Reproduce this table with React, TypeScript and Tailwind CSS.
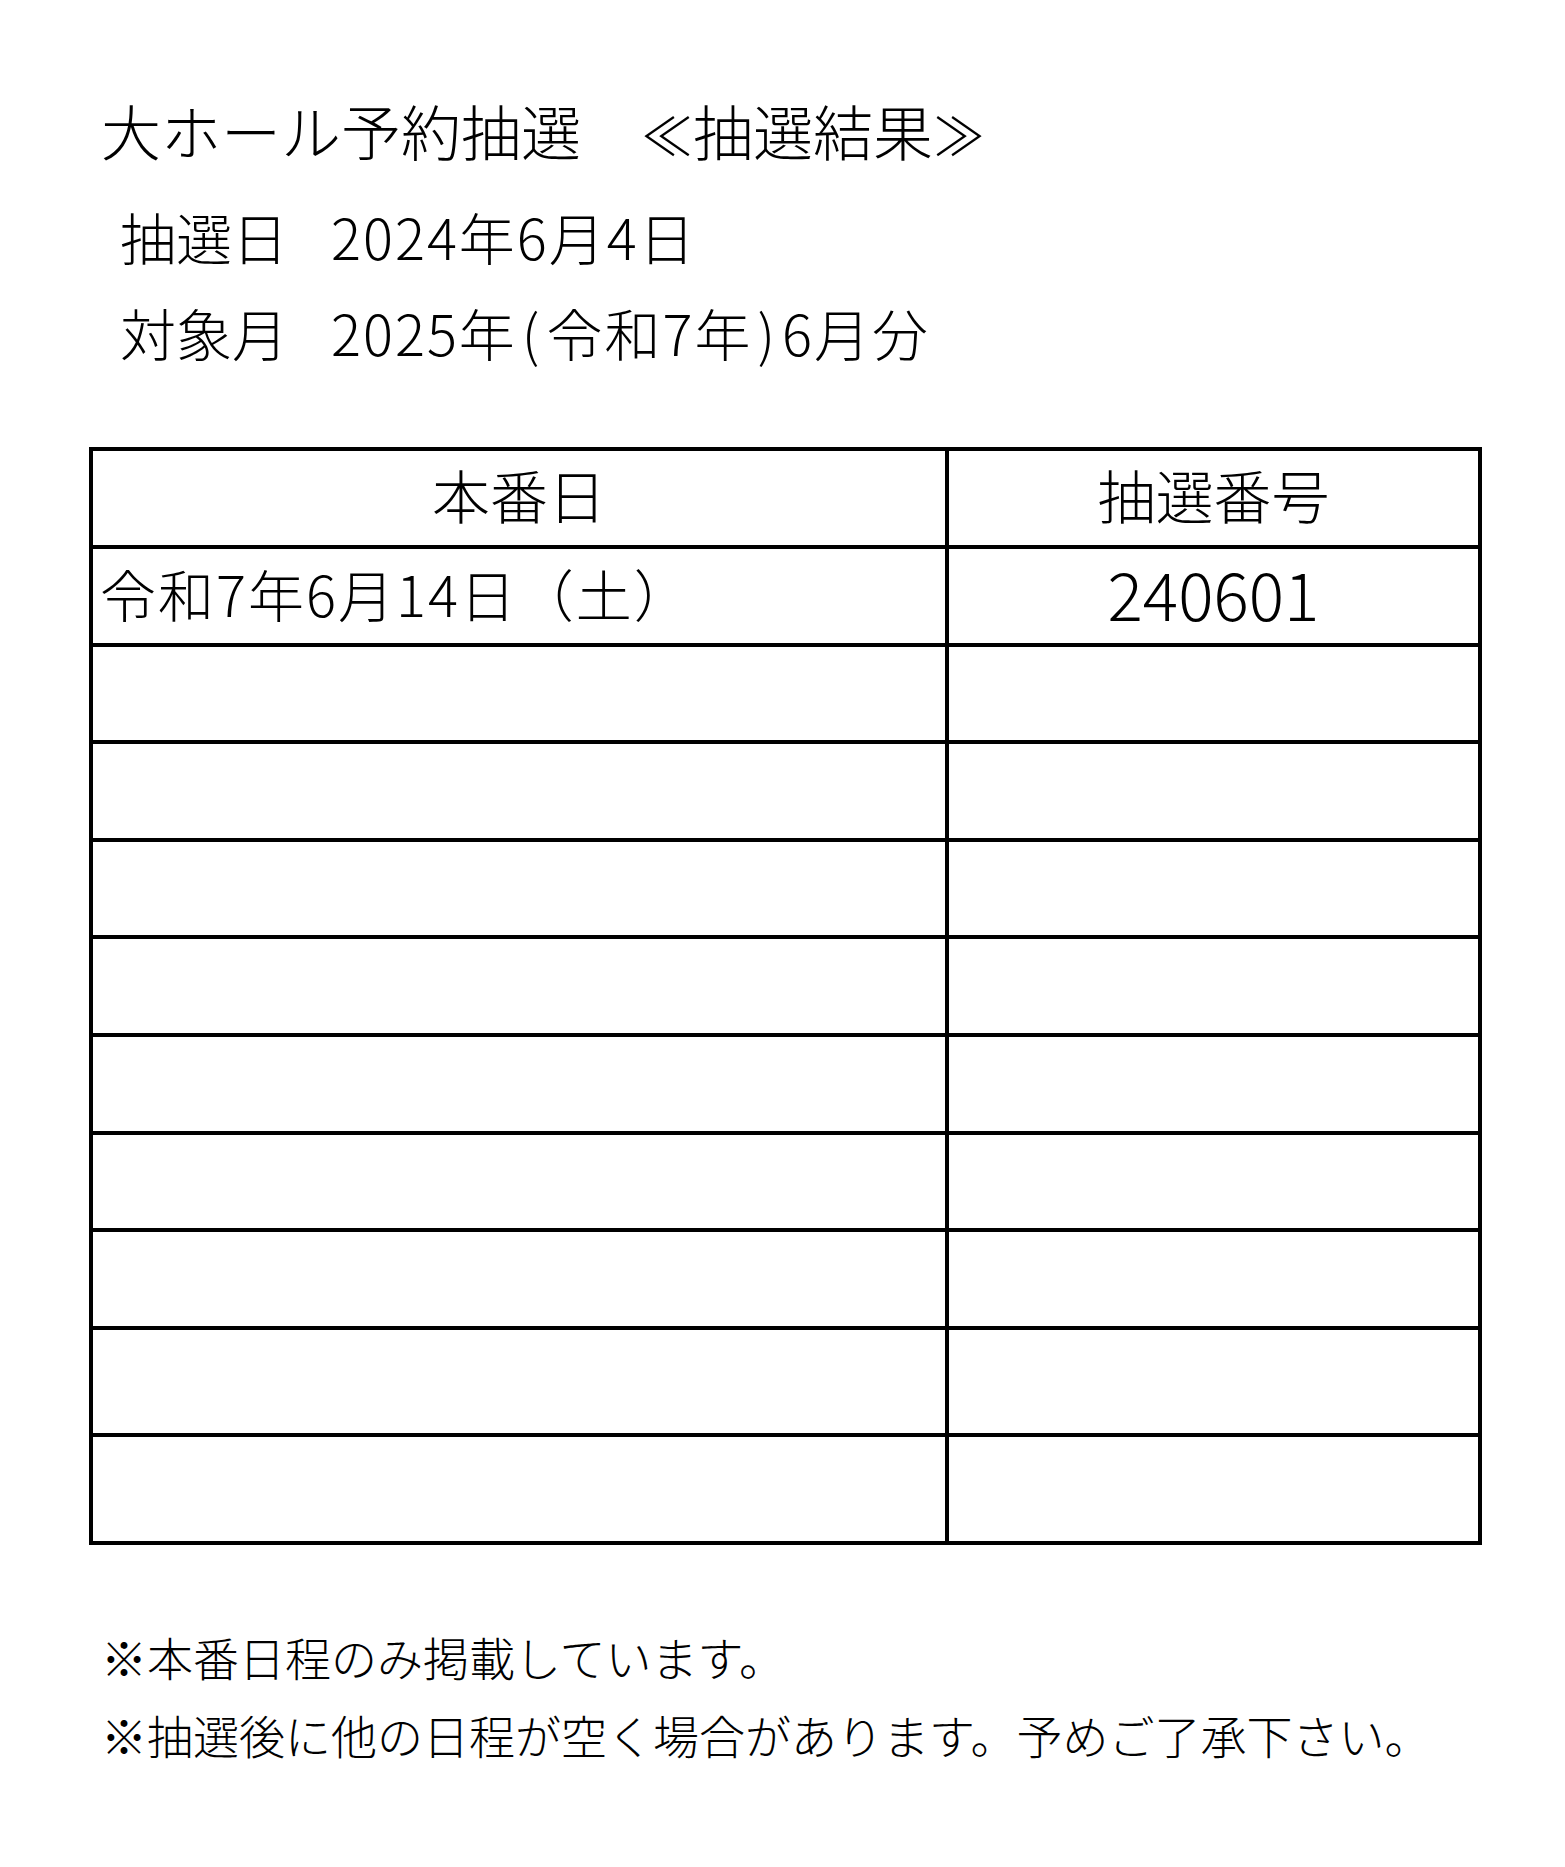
const rows = [
  { date: '令和7年6月14日（土）', no: '240601' },
  ...Array.from({ length: 7 }, () => ({ date: '', no: '' })),
];

export default function App() {
  return (
    <div className="min-h-screen bg-white text-black font-light font-['Noto_Sans_CJK_JP','Noto_Sans_CJK_SC',sans-serif]">
      <div className="px-[89px] pt-[100px] pb-[120px]">
        {/* 見出し */}
        <h1 className="ml-[12px] h-[60px] text-[60px] leading-[60px] font-light whitespace-pre">
          大ホール予約抽選　<span className="text-[52px]">≪</span>抽選結果<span className="text-[52px]">≫</span>
        </h1>
        <div className="mt-[48px] ml-[31px] flex h-[56px] text-[56px] leading-[56px]">
          <span>抽選日</span>
          <span className="ml-[43px] tracking-[2px]">2024年6月4日</span>
        </div>
        <div className="mt-[40px] ml-[31px] flex h-[56px] text-[56px] leading-[56px]">
          <span>対象月</span>
          <span className="ml-[43px] tracking-[2px]">
            2025年<span className="px-[5px]">(</span>令和7年<span className="px-[5px]">)</span>6月分
          </span>
        </div>

        {/* 抽選結果の表 */}
        <div className="mt-[87px] w-[1393px] border-4 border-black">
          <div className="flex h-[98px] border-b-4 border-black">
            <div className="flex w-[856px] items-center justify-center border-r-4 border-black pb-[8px] text-[58px]">本番日</div>
            <div className="flex flex-1 items-center justify-center pb-[8px] text-[58px]">抽選番号</div>
          </div>
          {rows.map((r, i) => (
            <div key={i} className="flex h-[97.6px] border-b-4 border-black">
              <div className="flex w-[856px] items-center border-r-4 border-black pb-[6px] pl-[7px] text-[56px] leading-none tracking-[2px]">{r.date}</div>
              <div className="flex flex-1 items-center justify-center pb-[8px] text-[66px] leading-none">{r.no}</div>
            </div>
          ))}
          <div className="flex h-[107px] border-b-4 border-black">
            <div className="w-[856px] border-r-4 border-black" />
            <div className="flex-1" />
          </div>
          <div className="flex h-[104px]">
            <div className="w-[856px] border-r-4 border-black" />
            <div className="flex-1" />
          </div>
        </div>

        {/* 注意書き */}
        <div className="mt-[72px] ml-[12px] text-[46px] leading-[78px]">
          <p>※本番日程のみ掲載しています。</p>
          <p>※抽選後に他の日程が空く場合があります。予めご了承下さい。</p>
        </div>
      </div>
    </div>
  );
}
